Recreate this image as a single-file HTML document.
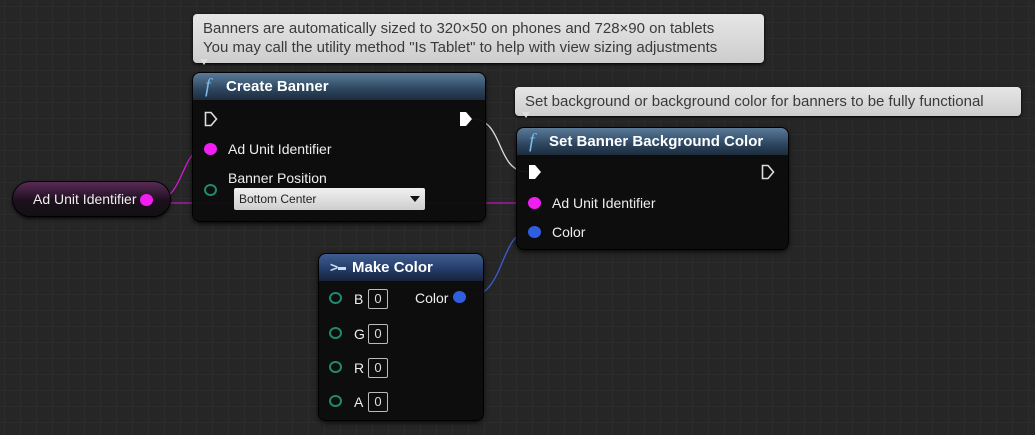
<!DOCTYPE html>
<html><head><meta charset="utf-8"><style>
*{margin:0;padding:0;box-sizing:border-box}
body{width:1035px;height:435px;overflow:hidden;background:#262626;font-family:"Liberation Sans",sans-serif;position:relative;
background-image:linear-gradient(#2c2c2c 1px,transparent 1px),linear-gradient(90deg,#2c2c2c 1px,transparent 1px);
background-size:16px 16px;background-position:4px 6px;}
.a{position:absolute}
.cm{position:absolute;background:linear-gradient(#e6e6e6,#cdcdcd);border-radius:4px;color:#3a3a3a;font-size:15px;line-height:19px;padding:5px 10px;box-shadow:0 1px 3px #000}
.cm:after{content:"";position:absolute;left:7px;bottom:-6px;border:4px solid transparent;border-top:6px solid #ddd}
.node{position:absolute;background:rgba(12,12,12,.96);border-radius:7px;box-shadow:0 0 0 1px #000,0 2px 6px #000}
.hd{height:27px;border-radius:7px 7px 0 0;color:#fff;font-weight:bold;font-size:15px;line-height:27px;padding-left:33px;position:relative}
.hd .f{position:absolute;left:12px;top:0;font-family:"Liberation Serif",serif;font-style:italic;color:#7ab8e8;font-size:20px;font-weight:normal}
.t{position:absolute;color:#eee;font-size:14px}
.pin{position:absolute;width:13px;height:12px;border-radius:50%}
.box{position:absolute;width:20px;height:20px;border:1.5px solid #bbb;border-radius:2px;color:#ddd;font-size:13px;text-align:center;line-height:17px}
</style></head><body>
<svg class="a" style="left:0;top:0" width="1035" height="435">
<path d="M155 200 C185 200 180 149 205 149" stroke="#d21ad2" stroke-width="1.3" fill="none"/>
<path d="M170 203 L528 203" stroke="#c018c0" stroke-width="1.3" fill="none"/>
<path d="M472 119 C505 119 495 172 528 172" stroke="#ddd" stroke-width="1.3" fill="none"/>
<path d="M468 297 C505 297 500 232 528 232" stroke="#3a5ed0" stroke-width="1.3" fill="none"/>
</svg>

<div class="cm" style="left:193px;top:14px;width:571px;height:49px">Banners are automatically sized to 320×50 on phones and 728×90 on tablets<br>You may call the utility method "Is Tablet" to help with view sizing adjustments</div>
<div class="cm" style="left:515px;top:87px;width:506px;height:29px;line-height:19px;padding-top:5px">Set background or background color for banners to be fully functional</div>

<div class="a" style="left:13px;top:182px;width:157px;height:34px;border-radius:17px;background:linear-gradient(#5a2a58,#1c101c 55%,#111);box-shadow:0 0 0 1px #000,0 2px 4px #000"></div>
<div class="t" style="left:33px;top:191px">Ad Unit Identifier</div>
<div class="pin" style="left:140px;top:194px;background:#f01ef0"></div>

<div class="node" style="left:193px;top:73px;width:292px;height:148px">
<div class="hd" style="background:linear-gradient(#5a7a98,#2d4660 60%,#1c2c3c)"><span class="f">f</span>Create Banner</div>
</div>
<svg class="a" style="left:204px;top:111px" width="14" height="16"><path d="M1.5 1.5H7L12.5 8L7 14.5H1.5Z" stroke="#ddd" stroke-width="1.6" fill="none"/></svg>
<svg class="a" style="left:459px;top:111px" width="14" height="16"><path d="M1 1H7L13 8L7 15H1Z" fill="#fff"/></svg>
<div class="pin" style="left:204px;top:143px;background:#f01ef0"></div>
<div class="t" style="left:228px;top:141px">Ad Unit Identifier</div>
<div class="t" style="left:228px;top:170px">Banner Position</div>
<div class="pin" style="left:204px;top:184px;border:2px solid #1f8a70"></div>
<div class="a" style="left:234px;top:188px;width:191px;height:22px;background:linear-gradient(#f0f0f0,#cfcfcf);border-radius:2px;font-size:12px;color:#222;line-height:22px;padding-left:5px">Bottom Center<span style="position:absolute;right:5px;top:8px;border:5px solid transparent;border-top:6px solid #111;border-bottom:0"></span></div>

<div class="node" style="left:517px;top:128px;width:271px;height:121px">
<div class="hd" style="background:linear-gradient(#5a7a98,#2d4660 60%,#1c2c3c);padding-left:32px"><span class="f">f</span>Set Banner Background Color</div>
</div>
<svg class="a" style="left:528px;top:164px" width="14" height="16"><path d="M1 1H7L13 8L7 15H1Z" fill="#fff"/></svg>
<svg class="a" style="left:761px;top:164px" width="14" height="16"><path d="M1.5 1.5H7L12.5 8L7 14.5H1.5Z" stroke="#ddd" stroke-width="1.6" fill="none"/></svg>
<div class="pin" style="left:528px;top:197px;background:#f01ef0"></div>
<div class="t" style="left:552px;top:195px">Ad Unit Identifier</div>
<div class="pin" style="left:528px;top:226px;background:#2f5ee0"></div>
<div class="t" style="left:552px;top:224px">Color</div>

<div class="node" style="left:319px;top:254px;width:164px;height:166px">
<div class="hd" style="background:linear-gradient(#3f5c90,#233a66 60%,#17233a)">Make Color<span style="position:absolute;left:11px;top:5px;color:#cde;font-weight:bold;font-size:14px;line-height:16px">&gt;<span style="display:inline-block;width:8px;height:3px;background:#cde;vertical-align:middle"></span></span></div>
</div>
<div class="t" style="left:415px;top:290px">Color</div>
<div class="pin" style="left:453px;top:291px;background:#2f5ee0"></div>
<div class="pin" style="left:329px;top:292px;border:2px solid #1f8a70"></div><div class="t" style="left:354px;top:291px">B</div><div class="box" style="left:368px;top:289px">0</div>
<div class="pin" style="left:329px;top:327px;border:2px solid #1f8a70"></div><div class="t" style="left:354px;top:326px">G</div><div class="box" style="left:368px;top:324px">0</div>
<div class="pin" style="left:329px;top:361px;border:2px solid #1f8a70"></div><div class="t" style="left:354px;top:360px">R</div><div class="box" style="left:368px;top:358px">0</div>
<div class="pin" style="left:329px;top:395px;border:2px solid #1f8a70"></div><div class="t" style="left:354px;top:394px">A</div><div class="box" style="left:368px;top:392px">0</div>
</body></html>
